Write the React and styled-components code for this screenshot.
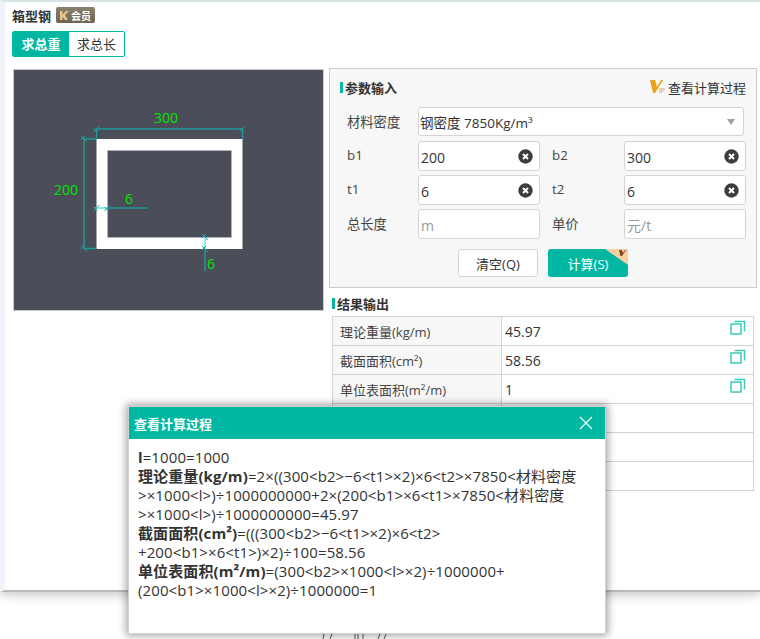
import styled, { createGlobalStyle } from "styled-components";

const GlobalStyle = createGlobalStyle`
  html, body {
    margin: 0;
    height: 639px;
    overflow: hidden;
    background: #fff;
  }
  body {
    font-family: "Open Sans", "Noto Sans CJK SC", sans-serif;
    font-size: 14px;
    color: #333;
  }
  * {
    box-sizing: border-box;
  }
`;

const Page = styled.div`
  height: 592px;
  border-top: 2px solid #d8e3e3;
  border-bottom: 2px solid #b9b9b9;
  border-left: 5px solid #f1f3f8;
  box-shadow: 0 3px 10px rgba(0, 0, 0, 0.22);
  padding: 4px 0 0 7px;
  background: #fff;
`;

const TitleRow = styled.div`
  display: flex;
  align-items: center;
  gap: 5px;
  height: 18px;
`;

const Title = styled.h1`
  margin: 0;
  font-size: 13px;
  font-weight: 700;
  color: #333;
`;

const MemberTag = styled.span`
  display: inline-flex;
  align-items: center;
  gap: 2px;
  width: 39px;
  height: 16px;
  padding-left: 4px;
  border-radius: 2px;
  background: linear-gradient(#8b7f6d, #6f6453);
  color: #fff;
  font-size: 10px;
  font-weight: 700;
`;

const Tabs = styled.div`
  display: flex;
  width: 113px;
  height: 26px;
  margin-top: 7px;
  border: 1px solid #00b8a2;
  border-radius: 2px;
  overflow: hidden;
`;

const Tab = styled.div`
  flex: ${(props) => (props.$active ? "0 0 56px" : "1")};
  display: flex;
  align-items: center;
  justify-content: center;
  padding-bottom: 2px;
  font-size: 13px;
  font-weight: ${(props) => (props.$active ? 700 : 400)};
  color: ${(props) => (props.$active ? "#fff" : "#333")};
  background: ${(props) => (props.$active ? "#00b8a2" : "#fff")};
`;

const Columns = styled.div`
  display: flex;
  align-items: flex-start;
  margin-top: 11px;
`;

const Drawing = styled.div`
  flex: 0 0 311px;
  height: 242px;
  margin: 1px 5px 0 1px;
  background: #4b4d58;
  border: 1px solid #cccccc;

  svg {
    display: block;
  }
`;

const RightColumn = styled.div`
  width: 428px;
`;

const ParamPanel = styled.section`
  height: 220px;
  border: 1px solid #cccccc;
  background: #f7f7f7;
  padding: 8px 10px 0 10px;
`;

const SectionHead = styled.div`
  display: flex;
  align-items: center;
  justify-content: space-between;
  height: 20px;
`;

const SectionTitle = styled.h2`
  display: flex;
  align-items: center;
  gap: 2px;
  margin: 0;
  font-size: 13px;
  font-weight: 700;
  color: #333;

  &::before {
    content: "";
    width: 3px;
    height: 11px;
    background: #00b8a2;
  }
`;

const ProcessLink = styled.a`
  display: flex;
  align-items: center;
  gap: 2px;
  font-size: 13px;
  color: #333;
`;

const FormGrid = styled.div`
  display: grid;
  grid-template-columns: 71px 122px 84px 122px;
  grid-auto-rows: 30px;
  row-gap: 4px;
  margin: 10px 0 0 7px;
`;

const FieldLabel = styled.label`
  display: flex;
  align-items: center;
  padding-left: ${(props) => (props.$second ? "12px" : "0")};
  padding-bottom: 2px;
  font-size: 13.3px;
  color: #444;
`;

const SelectBox = styled.div`
  grid-column: 2 / 5;
  height: 29px;
  margin-right: 2px;
  display: flex;
  align-items: center;
  justify-content: space-between;
  padding: 0 8px 0 1px;
  background: #fff;
  border: 1px solid #d4d4d4;
  border-radius: 3px;
  font-size: 13.5px;
  color: #333;

  &::after {
    content: "";
    border-left: 4px solid transparent;
    border-right: 4px solid transparent;
    border-top: 6px solid #a0a0a0;
  }
`;

const InputWrap = styled.div`
  display: flex;
  align-items: center;
  padding-right: 6px;
  background: #fff;
  border: 1px solid #d4d4d4;
  border-radius: 3px;
`;

const Field = styled.input`
  flex: 1;
  min-width: 0;
  height: 100%;
  padding: 2px 0 0 2px;
  border: none;
  outline: none;
  background: transparent;
  font: inherit;
  color: #333;

  &::placeholder {
    color: #999;
  }
`;

const ButtonRow = styled.div`
  display: flex;
  justify-content: center;
  gap: 10px;
  margin: 10px 0 0 0;
`;

const Button = styled.button`
  position: relative;
  width: 80px;
  height: 28px;
  padding: 0;
  border: ${(props) => (props.$primary ? "none" : "1px solid #d4d4d4")};
  border-radius: 3px;
  background: ${(props) => (props.$primary ? "#00b8a2" : "#fff")};
  color: ${(props) => (props.$primary ? "#fff" : "#333")};
  font: inherit;
  font-size: 13px;
  overflow: hidden;
`;

const CornerBadge = styled.svg`
  position: absolute;
  top: 0;
  right: 0;
`;

const ResultHead = styled.div`
  margin: 6px 0 0 3px;
  height: 18px;
  display: flex;
  align-items: center;
`;

const ResultTable = styled.table`
  width: 422px;
  margin: 4px 0 0 3px;
  border-collapse: collapse;
  table-layout: fixed;

  td {
    height: 29px;
    padding: 0;
    border: 1px solid #d2d2d2;
  }
`;

const NameCell = styled.td`
  width: 169px;
  padding-left: 7px !important;
  background: ${(props) => (props.$empty ? "#fff" : "#f7f7f7")};
  font-size: 13px;
  color: #444;
`;

const ValueCell = styled.td`
  position: relative;
  padding: 1px 0 0 3px !important;
  font-size: 14px;
`;

const CopyIcon = styled.svg`
  position: absolute;
  top: 3px;
  right: 7px;
`;

const Modal = styled.div`
  position: absolute;
  left: 128px;
  top: 406px;
  width: 478px;
  height: 228px;
  background: #fff;
  border: 1px solid #d0d0d0;
  box-shadow: 0 0 8px 2px rgba(0, 0, 0, 0.35);
`;

const ModalHeader = styled.div`
  display: flex;
  align-items: center;
  justify-content: space-between;
  height: 32px;
  padding: 0 12px 0 5px;
  background: #00b8a2;
  color: #fff;
  font-size: 13px;
  font-weight: 700;
`;

const ModalBody = styled.div`
  padding: 9px 0 0 9px;
  line-height: 19px;
  font-size: 15px;
  letter-spacing: 0.1px;
  color: #333;
`;

const Line = styled.div`
  white-space: nowrap;

  b {
    font-weight: 700;
  }
`;

const PeekMarks = styled.svg`
  position: absolute;
  left: 320px;
  top: 634px;
`;

const ClearIcon = () => (
  <svg width="15" height="15" viewBox="0 0 15 15">
    <circle cx="7.5" cy="7.5" r="7.2" fill="#3d3d3d" />
    <path d="M5 5l5 5M10 5l-5 5" stroke="#fff" strokeWidth="2" />
  </svg>
);

const VipLogo = () => (
  <svg width="16" height="14" viewBox="0 0 16 14">
    <path d="M0 0h5l2 7 4-7h2L5 13H3z" fill="#e8a317" />
    <text x="9" y="13" fontSize="6.5" fontFamily="Liberation Sans" fill="#e8a317">
      IP
    </text>
  </svg>
);

const Copy = () => (
  <CopyIcon width="16" height="16" viewBox="0 0 16 16" fill="none" stroke="#3ccbb8" strokeWidth="1.5">
    <rect x="1" y="4" width="10" height="10" />
    <path d="M4.5 1.5H14.5V11.5" />
  </CopyIcon>
);

const Tick = ({ x, y, rotate = 0 }) => (
  <path d="M-3 3L3 -3M-3 -1L1 3" transform={`translate(${x} ${y}) rotate(${rotate})`} stroke="#1fa3a3" strokeWidth="1" fill="none" />
);

const SectionDrawing = () => (
  <svg width="309" height="240" viewBox="14 70 309 240">
    <rect x="96.5" y="139" width="146" height="110" fill="#fff" />
    <rect x="107.5" y="150.5" width="124" height="87" fill="#4b4d58" stroke="#b5b5bb" strokeWidth="0.8" />
    <g stroke="#1f9a9c" strokeWidth="1.4" fill="none">
      <path d="M96.5 129H242.5M96.5 129V139M242.5 129V139" />
      <path d="M84 139V248M84 139H96.5M84 248.5H96.5" />
      <path d="M107 208H147" />
      <path d="M205 249V271" />
    </g>
    <g stroke="#5fe3e0" strokeWidth="1.4" fill="none">
      <path d="M95 208H107" />
      <path d="M205 237V249" />
    </g>
    <Tick x={96.5} y={129} />
    <Tick x={242.5} y={129} />
    <Tick x={84} y={139} rotate={90} />
    <Tick x={84} y={248.5} rotate={90} />
    <Tick x={96.5} y={208} />
    <Tick x={107.5} y={208} />
    <Tick x={205} y={237} rotate={90} />
    <Tick x={205} y={249} rotate={90} />
    <g fill="#00e600" fontFamily="Open Sans, sans-serif" fontSize="14">
      <text x="154" y="123">300</text>
      <text x="54" y="195">200</text>
      <text x="125" y="204">6</text>
      <text x="207" y="269">6</text>
    </g>
  </svg>
);

const inputs = [
  [
    { label: "b1", value: "200" },
    { label: "b2", value: "300" },
  ],
  [
    { label: "t1", value: "6" },
    { label: "t2", value: "6" },
  ],
  [
    { label: "总长度", placeholder: "m" },
    { label: "单价", placeholder: "元/t" },
  ],
];

const results = [
  { name: "理论重量(kg/m)", value: "45.97" },
  { name: "截面面积(cm²)", value: "58.56" },
  { name: "单位表面积(m²/m)", value: "1" },
  {},
  {},
  {},
];

const Cell = ({ item, second }) => (
  <>
    <FieldLabel $second={second}>{item.label}</FieldLabel>
    <InputWrap>
      <Field readOnly value={item.value} placeholder={item.placeholder} />
      {item.value && <ClearIcon />}
    </InputWrap>
  </>
);

const App = () => {
  return (
    <>
      <GlobalStyle />
      <Page>
        <TitleRow>
          <Title>箱型钢</Title>
          <MemberTag>
            <svg width="9" height="9" viewBox="0 0 9 9">
              <path d="M0 0h2.5v3.5L6 0h3L5 4l3 5H5L2.5 5.5V9H0z" fill="#e6c98f" />
            </svg>
            会员
          </MemberTag>
        </TitleRow>
        <Tabs>
          <Tab $active>求总重</Tab>
          <Tab>求总长</Tab>
        </Tabs>
        <Columns>
          <Drawing>
            <SectionDrawing />
          </Drawing>
          <RightColumn>
            <ParamPanel>
              <SectionHead>
                <SectionTitle>参数输入</SectionTitle>
                <ProcessLink>
                  <VipLogo />
                  查看计算过程
                </ProcessLink>
              </SectionHead>
              <FormGrid>
                <FieldLabel>材料密度</FieldLabel>
                <SelectBox>钢密度 7850Kg/m³</SelectBox>
                {inputs.map((row) =>
                  row.map((item, i) => (
                    <Cell key={item.label} item={item} second={i === 1} />
                  ))
                )}
              </FormGrid>
              <ButtonRow>
                <Button>清空(Q)</Button>
                <Button $primary>
                  计算(S)
                  <CornerBadge width="23" height="16" viewBox="0 0 23 16">
                    <path d="M0 0H23V16z" fill="#f8cfa0" />
                    <path d="M14 1h3l1 3 2-3h1l-4 6h-1.5z" fill="#7a4a22" />
                  </CornerBadge>
                </Button>
              </ButtonRow>
            </ParamPanel>
            <ResultHead>
              <SectionTitle>结果输出</SectionTitle>
            </ResultHead>
            <ResultTable>
              <tbody>
                {results.map((row, i) => (
                  <tr key={i}>
                    <NameCell $empty={!row.name}>{row.name}</NameCell>
                    <ValueCell>
                      {row.value}
                      {row.name && <Copy />}
                    </ValueCell>
                  </tr>
                ))}
              </tbody>
            </ResultTable>
          </RightColumn>
        </Columns>
      </Page>
      <PeekMarks width="70" height="5" viewBox="0 0 70 5" stroke="#555" strokeWidth="1" fill="none">
        <path d="M3 5L4 0M10 5L12 0M35 0V5M43 0V5M38 0V5M58 5L60 0M64 5L66 0" />
      </PeekMarks>
      <Modal>
        <ModalHeader>
          查看计算过程
          <svg width="14" height="14" viewBox="0 0 14 14" stroke="#fff" strokeWidth="1.1">
            <path d="M1 1l12 12M13 1L1 13" />
          </svg>
        </ModalHeader>
        <ModalBody>
          <Line><b>l</b>=1000=1000</Line>
          <Line><b>理论重量(kg/m)</b>=2×((300&lt;b2&gt;−6&lt;t1&gt;×2)×6&lt;t2&gt;×7850&lt;材料密度</Line>
          <Line>&gt;×1000&lt;l&gt;)÷1000000000+2×(200&lt;b1&gt;×6&lt;t1&gt;×7850&lt;材料密度</Line>
          <Line>&gt;×1000&lt;l&gt;)÷1000000000=45.97</Line>
          <Line><b>截面面积(cm²)</b>=(((300&lt;b2&gt;−6&lt;t1&gt;×2)×6&lt;t2&gt;</Line>
          <Line>+200&lt;b1&gt;×6&lt;t1&gt;)×2)÷100=58.56</Line>
          <Line><b>单位表面积(m²/m)</b>=(300&lt;b2&gt;×1000&lt;l&gt;×2)÷1000000+</Line>
          <Line>(200&lt;b1&gt;×1000&lt;l&gt;×2)÷1000000=1</Line>
        </ModalBody>
      </Modal>
    </>
  );
};

export default App;
